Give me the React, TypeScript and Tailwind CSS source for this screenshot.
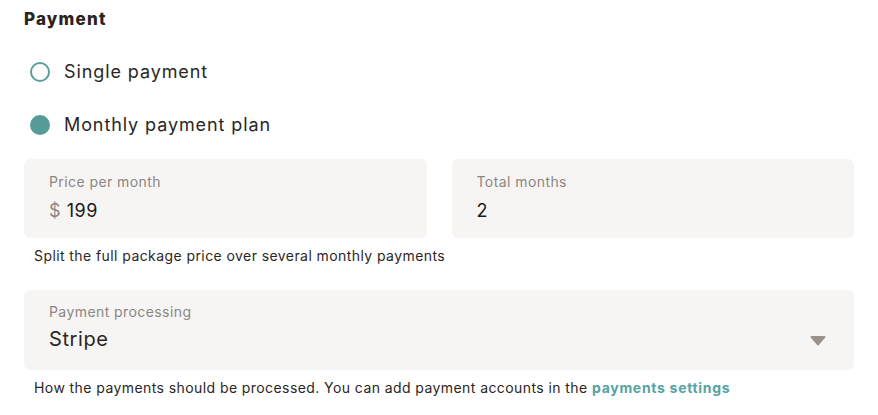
export default function App() {
  return (
    <div
      className="bg-white w-[878px] h-[415px] pl-6 pr-6 pt-[9px] text-[#2a2522]"
      style={{ fontFamily: "Inter, 'Noto Sans', sans-serif" }}
    >
      <h2 className="text-[17px] font-extrabold leading-5 tracking-[0.07em] text-[#2a2320]">Payment</h2>

      <div className="mt-[33px] flex flex-col gap-[33px] pl-[6px]">
        <label className="flex items-center gap-[14px] h-5">
          <span className="w-5 h-5 rounded-full border-2 border-[#5a9e9b] bg-white" />
          <span className="text-[18px] leading-5 tracking-[0.05em] text-[#2b2624]">Single payment</span>
        </label>
        <label className="flex items-center gap-[14px] h-5">
          <span className="w-5 h-5 rounded-full bg-[#559c98]" />
          <span className="text-[18px] leading-5 tracking-[0.05em] text-[#2b2624]">Monthly payment plan</span>
        </label>
      </div>

      <div className="mt-[24px] grid grid-cols-2 gap-[25px] w-[830px]">
        <div className="h-[79px] rounded-md bg-[#f6f5f3] px-[25px] pt-[13px]">
          <div className="text-[14px] leading-5 tracking-[0.03em] text-[#8c8682]">Price per month</div>
          <div className="mt-[7px] text-[18px] leading-6 tracking-[0.03em] text-[#1c1917]">
            <span className="text-[#8c8682]">$</span> 199
          </div>
        </div>
        <div className="h-[79px] rounded-md bg-[#f6f5f3] px-[25px] pt-[13px]">
          <div className="text-[14px] leading-5 tracking-[0.03em] text-[#8c8682]">Total months</div>
          <div className="mt-[7px] text-[18px] leading-6 text-[#1c1917]">2</div>
        </div>
      </div>
      <p className="mt-[8px] pl-[10px] text-[14px] leading-5 tracking-[0.03em] text-[#2b2624]">
        Split the full package price over several monthly payments
      </p>

      <div className="mt-[24px] w-[830px] h-[80px] rounded-md bg-[#f6f5f3] pl-[25px] pr-[28px] pt-[12px] flex justify-between">
        <div>
          <div className="text-[14px] leading-5 tracking-[0.03em] text-[#8c8682]">Payment processing</div>
          <div className="mt-[3px] text-[20px] leading-7 tracking-[0.03em] text-[#2b2624]">Stripe</div>
        </div>
        <svg width="16" height="11" viewBox="0 0 16 11" className="mt-[33px]">
          <path d="M1.5 1h13a1 1 0 0 1 .8 1.6l-6.5 7.3a1 1 0 0 1-1.6 0L.7 2.6A1 1 0 0 1 1.5 1z" fill="#9c908a" />
        </svg>
      </div>
      <p className="mt-[8px] pl-[10px] text-[14px] leading-5 tracking-[0.03em] text-[#2b2624]">
        How the payments should be processed. You can add payment accounts in the{" "}
        <span className="font-bold tracking-[0.05em] text-[#55a3a2]">payments settings</span>
      </p>
    </div>
  );
}
